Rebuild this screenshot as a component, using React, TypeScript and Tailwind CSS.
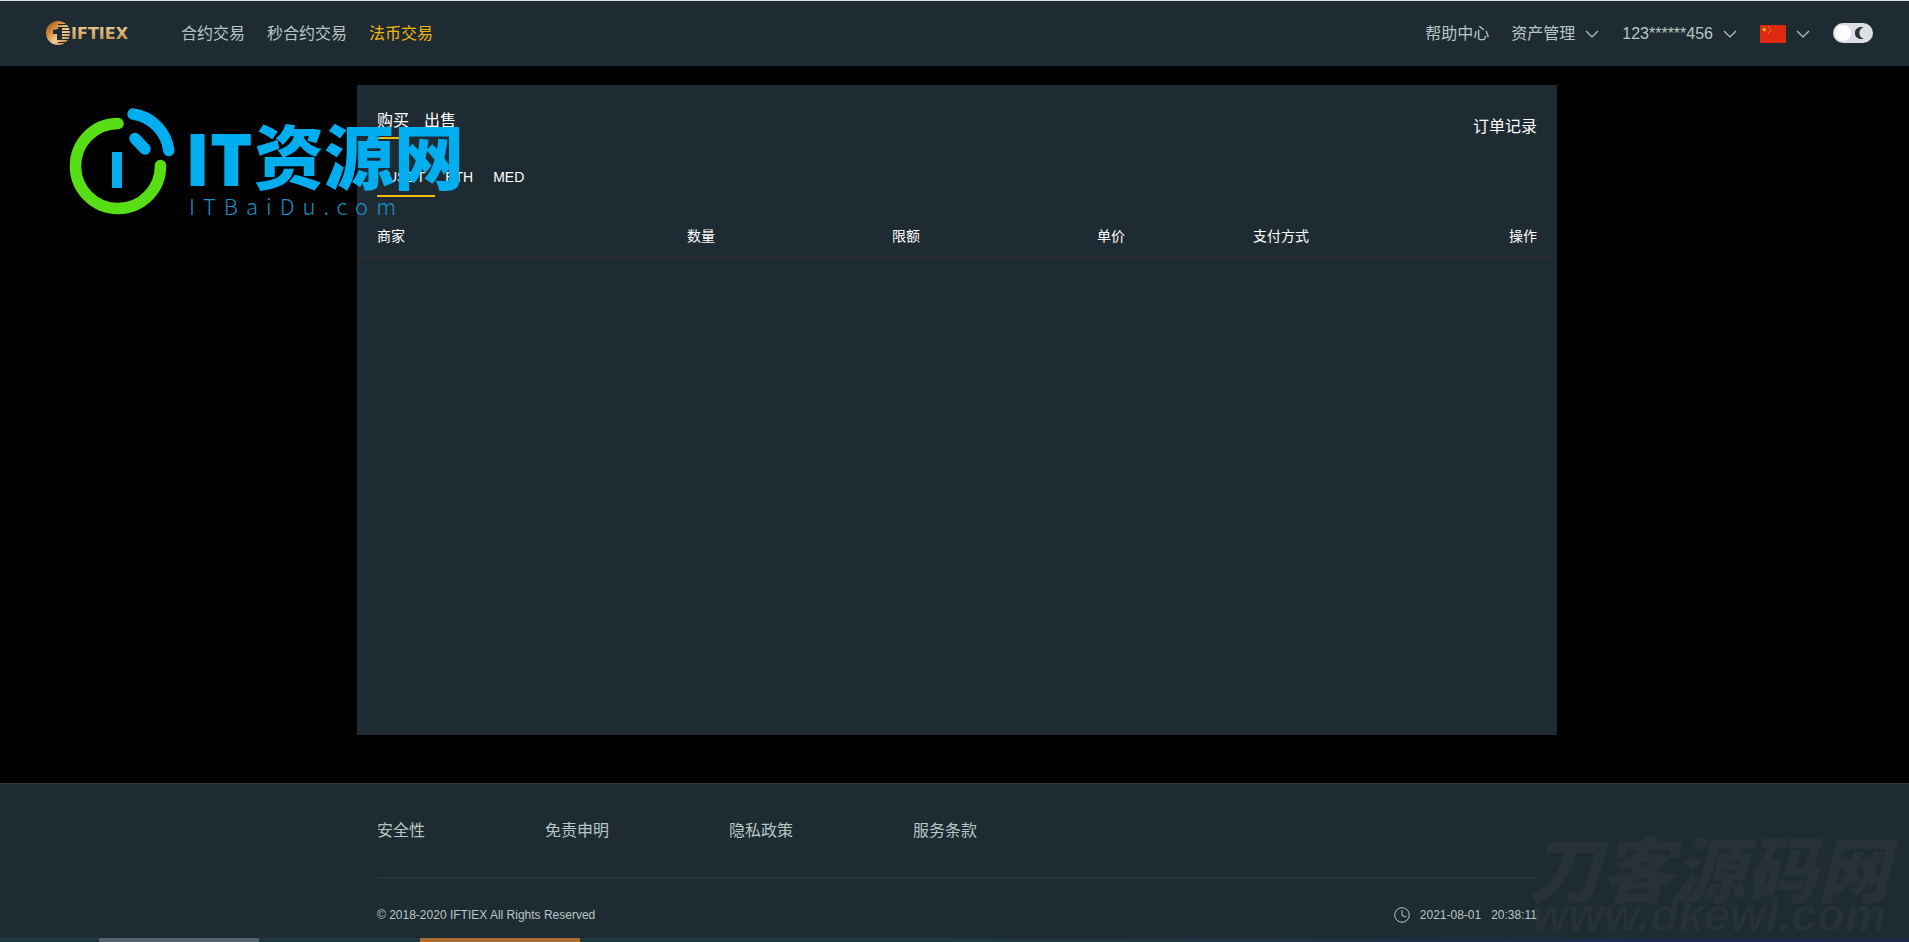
import { useState } from "react";

const NAV = [
  { label: "合约交易", active: false },
  { label: "秒合约交易", active: false },
  { label: "法币交易", active: true },
];

const COINS = ["USDT", "ETH", "MED"];

const COLUMNS = [
  { label: "商家", className: "w-[318px] pl-5 text-left" },
  { label: "数量", className: "w-[205px] pl-3 text-left" },
  { label: "限额", className: "w-[205px] pl-3 text-left" },
  { label: "单价", className: "w-[156px] pl-3 text-left" },
  { label: "支付方式", className: "w-[156px] pl-3 text-left" },
  { label: "操作", className: "pr-5 text-right" },
];

const FOOTER_LINKS = [
  { label: "安全性", className: "w-[168px]" },
  { label: "免责申明", className: "w-[184px]" },
  { label: "隐私政策", className: "w-[184px]" },
  { label: "服务条款", className: "" },
];

function Chevron() {
  return (
    <svg width="14" height="8" viewBox="0 0 14 8" fill="none" stroke="currentColor" strokeWidth="1.2">
      <path d="M1 1l6 6 6-6" />
    </svg>
  );
}

function Logo() {
  return (
    <svg width="84" height="28" viewBox="0 0 84 28" role="img" aria-label="IFTIEX">
      <defs>
        <linearGradient id="coin" x1="0" y1="0" x2="1" y2="1">
          <stop offset="0" stopColor="#8a4f1c" />
          <stop offset="0.35" stopColor="#d8923f" />
          <stop offset="0.6" stopColor="#f3cf94" />
          <stop offset="1" stopColor="#b0692a" />
        </linearGradient>
        <linearGradient id="gold" x1="0" y1="0" x2="0" y2="1">
          <stop offset="0" stopColor="#efcf95" />
          <stop offset="1" stopColor="#bf8b4a" />
        </linearGradient>
      </defs>
      <circle cx="13" cy="13" r="12" fill="url(#coin)" />
      <path d="M8 10l5-1V7h4v13h-5v-6H8z" fill="#1f2b33" />
      <path d="M13 4.500h10M15 7.500h10M17 10.500h8M17 13.500h8M17 16.500h8M17 19.500h7M13 22.500h8" stroke="#1f2b33" strokeWidth="1.1" />
      <text x="26" y="19" fill="url(#gold)" fontFamily="'DejaVu Sans', sans-serif" fontSize="16" fontWeight="700">
        IFTIEX
      </text>
    </svg>
  );
}

function Flag() {
  return (
    <svg width="26" height="18" viewBox="0 0 26 18" role="img" aria-label="中文">
      <rect width="26" height="18" fill="#de2910" />
      <path d="M4.3 2l.6 1.700h1.800L5.300 4.800l.5 1.800-1.500-1.100-1.500 1.100.5-1.800L1.900 3.700h1.800z" fill="#ffde00" />
      <g fill="#e8900a">
        <circle cx="8.500" cy="2" r=".7" />
        <circle cx="10.300" cy="3.700" r=".7" />
        <circle cx="10.300" cy="6.200" r=".7" />
        <circle cx="8.500" cy="8" r=".7" />
      </g>
    </svg>
  );
}

function ThemeSwitch() {
  const [dark, setDark] = useState(true);
  return (
    <button
      type="button"
      role="switch"
      aria-checked={dark}
      aria-label="夜间模式"
      onClick={() => setDark(!dark)}
      className="mb-0.5 flex h-5 w-10 items-center justify-between rounded-full bg-[#dcdfe6] pr-2 pl-0.5"
    >
      <span className="size-4 rounded-full bg-white" />
      <svg width="10" height="12" viewBox="0 0 10 12" fill="#303133">
        <path d="M8.500 .6A6 6 0 1 0 8.500 11.400A5.600 5.600 0 0 1 8.500 .6z" />
      </svg>
    </button>
  );
}

function Header() {
  return (
    <header className="flex h-[66px] items-center justify-between border-t border-[#dce0e2] bg-[#1f2b33] pr-9 pl-[45px] text-base text-[#b7c7c3]">
      <div className="flex items-center">
        <a href="#home">
          <Logo />
        </a>
        <nav className="ml-[52px] flex gap-[22px]">
          {NAV.map((item) => (
            <a key={item.label} href="#trade" className={item.active ? "text-[#f0b90b]" : ""}>
              {item.label}
            </a>
          ))}
        </nav>
      </div>
      <div className="flex items-center">
        <a href="#help">帮助中心</a>
        <button type="button" className="ml-[22px] flex items-center gap-[10px]">
          资产管理
          <Chevron />
        </button>
        <button type="button" className="ml-[23px] flex items-center gap-[10px]">
          123******456
          <Chevron />
        </button>
        <button type="button" aria-label="语言" className="mr-[23px] ml-[23px] flex items-center gap-[10px]">
          <Flag />
          <Chevron />
        </button>
        <ThemeSwitch />
      </div>
    </header>
  );
}

function OrderPanel() {
  const [side, setSide] = useState("购买");
  const [coin, setCoin] = useState("USDT");

  return (
    <main className="mx-auto mt-[19px] min-h-[650px] w-full max-w-[1200px] bg-[#1f2b33] text-white">
      <div className="flex items-start justify-between px-5 pt-6">
        <div className="flex gap-[15px]">
          {["购买", "出售"].map((s) => (
            <button
              key={s}
              type="button"
              onClick={() => setSide(s)}
              className={`h-[30px] border-b-2 pb-1 text-base leading-6 ${side === s ? "border-[#f0b90b]" : "border-transparent"}`}
            >
              {s}
            </button>
          ))}
        </div>
        <a href="#orders" className="mt-[6px] text-base leading-6">
          订单记录
        </a>
      </div>

      <div className="mt-[18px] flex px-5">
        {COINS.map((c) => (
          <button
            key={c}
            type="button"
            onClick={() => setCoin(c)}
            className={`h-10 border-b-2 px-[10px] pt-0.5 text-sm leading-9 ${coin === c ? "border-[#f0b90b]" : "border-transparent"}`}
          >
            {c}
          </button>
        ))}
      </div>

      <table className="mt-[19px] w-full table-fixed border-collapse text-sm">
        <thead>
          <tr className="h-10 border-b border-[#332b2e]">
            {COLUMNS.map((col) => (
              <th key={col.label} scope="col" className={`font-normal ${col.className}`}>
                {col.label}
              </th>
            ))}
          </tr>
        </thead>
      </table>
    </main>
  );
}

function Footer() {
  return (
    <footer className="mt-12 border-t border-[#3a3b3e] bg-[#1f2b33] text-[#b7c7c3]">
      <div className="pl-[5px]">
        <div className="mx-auto w-full max-w-[1200px] px-5">
          <div className="flex h-[94px] items-center border-b border-[#333a3e] text-base">
            {FOOTER_LINKS.map((link) => (
              <a key={link.label} href="#about" className={link.className}>
                {link.label}
              </a>
            ))}
          </div>
          <div className="flex h-[60px] items-center justify-between pt-[14px] text-xs">
            <p>© 2018-2020 IFTIEX All Rights Reserved</p>
            <p className="flex items-center">
              <svg width="16" height="16" viewBox="0 0 16 16" fill="none" stroke="currentColor" className="mr-[10px]">
                <circle cx="8" cy="8" r="7.300" />
                <path d="M8 3v5.500l4.500 1.500" />
              </svg>
              <span>2021-08-01</span>
              <span className="ml-[10px]">20:38:11</span>
            </p>
          </div>
        </div>
      </div>
      <div className="flex h-1 bg-linear-to-r from-[#20383f] from-50% to-[#1c2748]">
        <span className="ml-[99px] w-40 bg-[#53636b]" />
        <span className="ml-[161px] w-40 bg-[#ab6a31]" />
      </div>
    </footer>
  );
}

// Site badge floating over the top left of the page
function SiteMark() {
  return (
    <svg
      className="pointer-events-none absolute top-[100px] left-[60px]"
      width="420"
      height="130"
      viewBox="60 100 420 130"
      fill="none"
      strokeLinecap="round"
    >
      <path d="M118 123.500A42.500 42.500 0 1 0 160.500 165.500" stroke="#57de14" strokeWidth="11.500" />
      <path d="M133 114A42 42 0 0 1 168.800 150.500" stroke="#00adef" strokeWidth="11.500" />
      <path d="M135 138.500l10 10.500" stroke="#00adef" strokeWidth="11.500" />
      <path d="M112 152h10v36h-10z" fill="#00adef" />
      <text x="185" y="186" fill="#00adef" fontFamily="'Open Sans', sans-serif" fontSize="72" fontWeight="800">
        IT
      </text>
      <text x="254" y="184" fill="#00adef" fontFamily="'Noto Sans CJK SC', sans-serif" fontSize="70" fontWeight="900">
        资源网
      </text>
      <text
        x="189"
        y="215"
        fill="#1791c6"
        className="tracking-[8px]"
        fontFamily="'Noto Sans CJK SC', sans-serif"
        fontSize="22"
        fontWeight="300"
      >
        ITBaiDu.com
      </text>
    </svg>
  );
}

function CornerMark() {
  return (
    <div className="pointer-events-none absolute right-5 bottom-0 flex flex-col items-center text-white/3 italic">
      <span className="text-[72px] leading-[72px] font-black">刀客源码网</span>
      <span className="-mt-5 text-[46px] leading-[54px] font-black">www.dkewl.com</span>
    </div>
  );
}

export default function App() {
  return (
    <div className="relative min-h-screen bg-black font-['Liberation_Sans','Noto_Sans_CJK_SC',sans-serif]">
      <Header />
      <div className="pl-[5px]">
        <OrderPanel />
      </div>
      <Footer />
      <CornerMark />
      <SiteMark />
    </div>
  );
}
